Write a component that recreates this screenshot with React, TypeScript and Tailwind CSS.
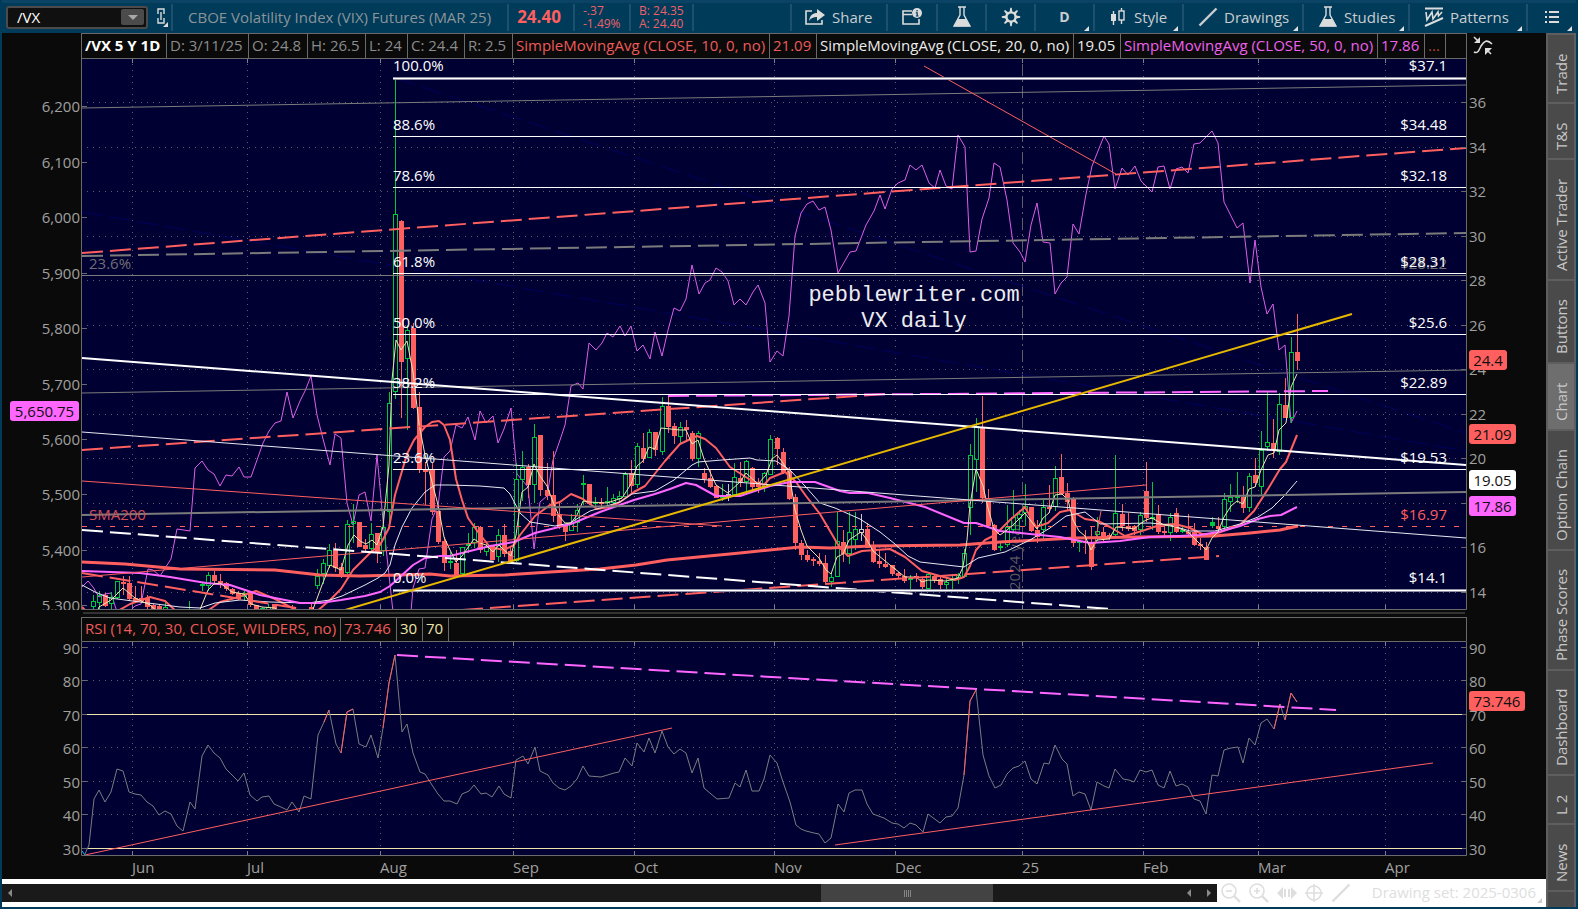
import React from 'react';

const RED = '#ff5f5f';
const GREEN = '#00c83c';
const PINK = '#ff66ff';
const CREAM = '#efe4ac';
const GREY = '#7b7b7b';
const NAVY = '#00005c';

const months = [
  { x: 132, label: 'Jun' },
  { x: 247, label: 'Jul' },
  { x: 380, label: 'Aug' },
  { x: 513, label: 'Sep' },
  { x: 634, label: 'Oct' },
  { x: 774, label: 'Nov' },
  { x: 895, label: 'Dec' },
  { x: 1022, label: '25' },
  { x: 1143, label: 'Feb' },
  { x: 1258, label: 'Mar' },
  { x: 1385, label: 'Apr' },
];

const leftTicks: [number, string][] = [
  [106, '6,200'], [162, '6,100'], [217, '6,000'], [273, '5,900'], [328, '5,800'],
  [384, '5,700'], [439, '5,600'], [494, '5,500'], [550, '5,400'], [605, '5,300'],
];

// 18 has no label, the SMA badge sits there
const rightTicks: [number, string][] = [
  [102, '36'], [147, '34'], [191, '32'], [236, '30'], [280, '28'], [325, '26'],
  [369, '24'], [414, '22'], [458, '20'], [503, ''], [547, '16'], [592, '14'],
];

const rsiTicks: [number, string][] = [
  [647, '90'], [680, '80'], [714, '70'], [747, '60'], [781, '50'], [814, '40'], [848, '30'],
];

const fibs: [number, string, string, number][] = [
  [78, '100.0%', '$37.1', 71],
  [136, '88.6%', '$34.48', 130],
  [187, '78.6%', '$32.18', 181],
  [273, '61.8%', '$28.31', 267],
  [334, '50.0%', '$25.6', 328],
  [394, '38.2%', '$22.89', 388],
  [469, '23.6%', '$19.53', 463],
  [590, '0.0%', '$14.1', 583],
];

// x, high, body top, body bottom, low, direction (g up, r down, w unchanged, f filled up)
type Candle = [number, number, number, number, number, string];
const candles: Candle[] = [
  [93, 595, 601, 607, 609, 'g'], [99, 591, 595, 603, 609, 'g'], [105, 593, 595, 606, 607, 'r'],
  [111, 592, 597, 604, 609, 'g'], [117, 581, 581, 598, 599, 'g'], [123, 576, 582, 584, 595, 'r'],
  [129, 576, 583, 599, 601, 'r'], [135, 586, 598, 601, 603, 'r'], [141, 586, 598, 601, 603, 'r'],
  [147, 595, 598, 607, 609, 'r'], [153, 604, 605, 609, 609, 'r'], [159, 604, 606, 609, 609, 'r'],
  [165, 601, 607, 610, 610, 'g'], [189, 601, 609, 612, 612, 'g'], [202, 582, 584, 586, 591, 'g'],
  [208, 572, 575, 586, 591, 'g'], [214, 571, 575, 581, 583, 'r'], [220, 574, 581, 585, 588, 'r'],
  [226, 582, 583, 589, 591, 'r'], [232, 588, 589, 594, 595, 'r'], [238, 591, 593, 598, 600, 'r'],
  [244, 591, 593, 597, 601, 'g'], [250, 591, 592, 605, 607, 'r'], [256, 605, 605, 609, 610, 'r'],
  [262, 607, 608, 612, 612, 'g'], [268, 604, 607, 612, 612, 'g'], [274, 604, 604, 609, 610, 'r'],
  [292, 605, 609, 612, 612, 'r'], [311, 603, 607, 612, 612, 'r'], [317, 569, 576, 586, 589, 'g'],
  [323, 559, 563, 574, 584, 'g'], [329, 544, 550, 566, 568, 'g'], [335, 543, 550, 568, 572, 'r'],
  [341, 563, 567, 576, 578, 'r'], [347, 520, 524, 573, 574, 'g'], [353, 504, 521, 524, 543, 'g'],
  [359, 522, 522, 547, 547, 'r'], [365, 539, 545, 549, 553, 'r'], [371, 523, 534, 549, 551, 'g'],
  [377, 533, 533, 553, 563, 'r'], [383, 510, 527, 551, 556, 'g'], [389, 392, 403, 512, 527, 'g'],
  [395, 78, 214, 392, 399, 'g'], [401, 220, 221, 362, 418, 'r'], [407, 325, 330, 359, 430, 'g'],
  [413, 323, 328, 408, 409, 'r'], [419, 392, 407, 469, 473, 'r'], [425, 462, 470, 472, 505, 'r'],
  [432, 463, 470, 512, 515, 'r'], [438, 511, 511, 542, 544, 'r'], [444, 537, 541, 563, 571, 'r'],
  [450, 552, 561, 563, 569, 'g'], [456, 550, 563, 576, 576, 'r'], [462, 547, 547, 574, 574, 'g'],
  [468, 533, 544, 546, 553, 'g'], [474, 523, 527, 543, 548, 'g'], [480, 526, 527, 550, 553, 'r'],
  [486, 541, 547, 552, 556, 'g'], [492, 545, 546, 560, 560, 'r'], [498, 529, 535, 557, 562, 'g'],
  [504, 524, 535, 554, 557, 'r'], [510, 547, 551, 563, 563, 'r'], [516, 463, 479, 561, 562, 'g'],
  [522, 451, 467, 480, 501, 'g'], [528, 464, 467, 485, 498, 'r'], [534, 424, 437, 485, 503, 'g'],
  [540, 435, 435, 490, 496, 'r'], [547, 463, 490, 496, 500, 'r'], [553, 451, 495, 516, 522, 'r'],
  [559, 502, 514, 527, 529, 'r'], [565, 524, 525, 532, 541, 'r'], [571, 514, 523, 531, 531, 'g'],
  [577, 504, 510, 523, 532, 'g'], [583, 475, 483, 485, 505, 'g'], [589, 484, 484, 504, 505, 'r'],
  [595, 497, 502, 504, 507, 'g'], [601, 498, 502, 504, 508, 'r'], [607, 487, 501, 503, 506, 'g'],
  [613, 494, 498, 503, 507, 'g'], [619, 491, 496, 499, 502, 'g'], [625, 472, 474, 497, 499, 'g'],
  [631, 460, 473, 486, 493, 'r'], [637, 443, 446, 485, 488, 'g'], [643, 433, 448, 459, 463, 'r'],
  [649, 429, 432, 458, 458, 'g'], [655, 432, 432, 450, 456, 'r'], [662, 397, 406, 452, 455, 'g'],
  [668, 396, 406, 427, 433, 'r'], [674, 423, 426, 436, 444, 'r'], [680, 422, 427, 437, 443, 'g'],
  [686, 420, 427, 430, 440, 'r'], [692, 431, 433, 459, 461, 'r'], [698, 431, 433, 459, 467, 'g'],
  [704, 468, 473, 479, 483, 'r'], [710, 470, 478, 487, 488, 'r'], [716, 485, 486, 498, 498, 'r'],
  [722, 484, 496, 498, 501, 'g'], [728, 484, 494, 496, 501, 'w'], [734, 463, 477, 495, 497, 'g'],
  [740, 462, 478, 482, 487, 'r'], [746, 460, 461, 482, 492, 'g'], [752, 467, 468, 487, 491, 'r'],
  [758, 478, 482, 487, 493, 'r'], [764, 472, 473, 487, 492, 'g'], [770, 435, 439, 475, 475, 'g'],
  [777, 437, 438, 449, 465, 'r'], [783, 448, 452, 473, 474, 'r'], [789, 467, 471, 499, 500, 'r'],
  [795, 494, 497, 543, 550, 'r'], [801, 540, 543, 555, 560, 'r'], [807, 550, 555, 560, 562, 'r'],
  [813, 557, 559, 561, 566, 'r'], [819, 553, 561, 564, 566, 'r'], [825, 555, 563, 582, 583, 'r'],
  [831, 573, 577, 582, 587, 'g'], [837, 512, 541, 577, 577, 'g'], [843, 530, 542, 554, 562, 'r'],
  [849, 512, 532, 554, 564, 'g'], [855, 512, 529, 540, 550, 'g'], [861, 514, 529, 533, 541, 'w'],
  [867, 523, 529, 548, 548, 'r'], [873, 541, 546, 562, 563, 'r'], [879, 550, 561, 564, 568, 'r'],
  [885, 553, 564, 567, 568, 'r'], [892, 565, 565, 574, 576, 'r'], [898, 572, 573, 576, 578, 'r'],
  [904, 569, 576, 581, 583, 'r'], [910, 575, 578, 580, 589, 'g'], [916, 573, 576, 578, 582, 'r'],
  [922, 578, 579, 587, 589, 'r'], [928, 572, 574, 589, 589, 'g'], [934, 574, 576, 580, 583, 'r'],
  [940, 575, 579, 585, 590, 'r'], [946, 578, 582, 585, 590, 'g'], [952, 574, 579, 581, 590, 'g'],
  [958, 573, 575, 578, 584, 'g'], [964, 549, 553, 577, 577, 'g'], [970, 444, 455, 508, 535, 'g'],
  [976, 418, 426, 460, 492, 'g'], [982, 396, 428, 498, 503, 'r'], [988, 489, 498, 526, 527, 'r'],
  [994, 524, 525, 550, 551, 'r'], [1000, 543, 546, 548, 551, 'g'], [1007, 505, 527, 545, 547, 'g'],
  [1013, 490, 517, 530, 532, 'g'], [1019, 510, 514, 519, 530, 'g'], [1025, 484, 506, 513, 526, 'g'],
  [1031, 507, 507, 531, 532, 'r'], [1037, 520, 530, 537, 543, 'r'], [1043, 498, 507, 530, 540, 'g'],
  [1049, 485, 507, 509, 513, 'r'], [1055, 466, 478, 507, 511, 'g'], [1061, 454, 477, 494, 495, 'r'],
  [1067, 483, 493, 502, 510, 'r'], [1073, 497, 499, 543, 547, 'r'], [1079, 540, 541, 543, 552, 'g'],
  [1085, 530, 542, 543, 554, 'r'], [1091, 527, 542, 567, 570, 'r'], [1097, 517, 531, 535, 541, 'g'],
  [1103, 527, 532, 537, 541, 'r'], [1109, 533, 535, 539, 540, 'r'], [1115, 455, 513, 535, 537, 'g'],
  [1122, 504, 514, 526, 531, 'r'], [1128, 513, 526, 529, 531, 'r'], [1134, 525, 527, 531, 535, 'r'],
  [1140, 512, 515, 530, 535, 'g'], [1146, 462, 491, 518, 522, 'r'], [1152, 482, 517, 519, 530, 'g'],
  [1158, 505, 514, 532, 534, 'r'], [1164, 527, 531, 533, 537, 'r'], [1170, 513, 517, 533, 541, 'g'],
  [1176, 508, 513, 532, 533, 'r'], [1182, 527, 530, 532, 533, 'g'], [1188, 514, 532, 534, 536, 'r'],
  [1194, 523, 532, 545, 546, 'r'], [1200, 538, 544, 546, 550, 'r'], [1206, 542, 547, 560, 560, 'r'],
  [1212, 517, 522, 526, 528, 'f'], [1218, 517, 527, 529, 531, 'r'], [1224, 493, 499, 527, 528, 'g'],
  [1230, 484, 497, 502, 512, 'g'], [1237, 472, 496, 498, 503, 'g'], [1243, 486, 497, 508, 513, 'r'],
  [1249, 473, 476, 508, 512, 'g'], [1255, 458, 475, 483, 487, 'r'], [1261, 431, 450, 487, 495, 'g'],
  [1267, 392, 442, 447, 451, 'g'], [1273, 419, 443, 450, 458, 'r'], [1279, 393, 404, 452, 455, 'g'],
  [1285, 378, 405, 418, 418, 'r'], [1291, 337, 352, 418, 423, 'g'], [1297, 314, 352, 361, 370, 'r'],
];

const spx = [
  '82,587 88,581 93,587 99,597 105,594 111,593 117,612',
  '129,612 135,606 141,604 148,569 153,570 160,576 171,559 177,529 190,531 195,468 202,461 208,470 214,474 220,486 226,475 232,476 239,467 244,477 251,477 263,443 269,431 275,423 281,421 287,392 293,418 300,401 305,391 311,376 317,415 323,439 330,465 335,434 341,438 347,503 353,525 359,495 365,492 371,521 377,455 383,520 393,612',
  '411,612 413,588 419,569 425,568 432,519 438,506 444,457 450,451 456,425 462,428 468,417 475,440 480,411 486,423 493,416 498,443 504,429 511,408 517,474 528,487 534,549 540,502 547,496 553,460 559,443 565,425 571,386 578,383 583,389 589,343 596,350 602,343 607,333 613,337 620,326 625,336 631,326 637,351 643,345 650,359 655,332 662,356 668,330 674,308 680,311 686,299 692,265 699,294 705,283 710,280 716,268 722,272 728,281 734,305 740,299 746,305 753,292 758,285 765,303 770,362 777,351 783,356 789,316 795,236 801,213 807,204 813,201 819,210 825,207 831,230 838,273 850,252 856,251 866,225 874,211 880,195 885,209 892,189 898,183 905,180 910,165 916,170 922,165 929,183 935,188 940,170 946,186 952,189 958,135 965,147 970,252 976,251 982,219 989,198 994,163 1000,167 1007,200 1013,243 1020,252 1025,262 1031,225 1037,203 1043,242 1050,243 1055,294 1061,283 1067,277 1073,224 1079,234 1086,194 1092,166 1104,136 1109,144 1115,189 1122,168 1128,175 1135,166 1141,181 1152,192 1158,167 1164,166 1170,189 1176,169 1182,167 1188,173 1194,144 1200,143 1212,131 1218,143 1224,202 1237,228 1243,223 1250,283 1255,240 1261,287 1267,314 1273,304 1279,350 1285,345 1291,423 1297,411',
];

const sma200 =
  '82,562 125,564 180,569 275,570 320,575 360,576 400,575 430,574 450,576 505,575 550,572 600,569 636,565 667,560 740,553 800,547 830,548 870,546 960,545 1000,542 1075,538 1140,537 1215,536 1250,533 1280,530 1298,526';
const sma50 =
  '82,571 140,573 170,577 206,583 230,585 260,595 300,603 320,603 341,600 365,596 380,592 390,586 400,577 413,565 425,558 440,556 450,556 490,546 514,542 535,533 571,524 600,512 634,500 655,494 670,489 686,483 696,485 716,496 740,496 770,486 790,482 815,482 840,491 850,493 868,493 890,498 925,507 964,523 976,523 1000,531 1030,534 1060,537 1090,543 1120,541 1150,537 1180,536 1200,535 1218,532 1240,526 1258,519 1270,516 1281,515 1297,507';
const sma20 =
  '82,585 95,592 110,598 140,602 180,607 200,608 215,603 240,600 270,602 308,603 330,600 342,596 365,585 378,578 385,573 390,565 395,545 402,527 412,508 425,492 435,485 450,485 480,486 504,488 510,494 520,513 530,522 555,526 570,523 590,511 620,502 632,494 655,491 674,480 692,465 698,462 722,460 750,458 757,460 776,461 790,470 805,486 820,503 835,508 860,519 880,532 895,544 908,556 920,562 964,567 978,558 1005,552 1030,540 1050,528 1066,516 1085,512 1100,524 1150,523 1170,525 1190,531 1215,531 1240,524 1258,517 1272,508 1285,495 1297,481';
const sma10 = [
  '82,607 87,612',
  '116,612 130,604 150,597 165,601 177,612',
  '206,612 220,602 235,598 256,591 275,599 300,612',
  '316,612 330,600 341,589 353,570 371,552 380,545 389,528 395,495 407,454 414,440 425,427 432,422 439,421 444,425 450,440 456,479 462,500 468,518 478,532 490,547 504,550 514,545 520,535 535,516 550,505 560,502 571,494 583,499 597,509 610,507 620,502 634,492 645,486 665,461 680,444 697,436 705,439 716,448 730,467 752,481 764,485 770,478 785,472 796,482 806,496 820,514 840,548 848,556 862,551 890,549 905,557 922,571 940,576 955,580 964,577 970,566 976,550 985,540 995,535 1010,520 1025,507 1036,527 1048,523 1060,512 1070,510 1085,519 1098,521 1110,527 1125,536 1145,530 1160,525 1175,524 1190,528 1202,534 1215,534 1240,525 1254,511 1268,489 1280,469 1286,462 1297,435',
];
const sma5 = [
  '97,612 99,607 111,600 123,588 135,598 150,605 158,612',
  '199,612 208,590 214,584 220,583 232,592 244,594 251,604 262,607 275,608 280,612',
  '312,612 322,585 330,565 341,570 348,545 354,535 360,541 366,544 372,540 377,545 383,527 389,465 392,380 396,340 401,350 407,341 413,372 419,424 425,455 432,482 438,505 444,537 450,550 456,562 462,556 474,539 480,543 486,545 493,552 499,545 504,550 511,556 516,535 522,492 528,487 534,464 540,476 547,486 553,502 559,516 565,523 571,523 577,515 583,501 589,502 607,503 622,498 631,484 637,466 643,461 649,447 655,449 661,428 680,430 686,430 692,444 698,440 704,459 716,485 728,493 740,482 746,473 758,484 766,475 772,459 777,455 783,463 789,472 795,510 801,530 807,546 819,558 826,570 831,574 837,557 843,554 849,540 861,532 867,540 873,551 890,565 905,577 916,577 922,582 928,580 946,581 958,578 963,567 967,540 970,505 976,469 983,486 988,508 994,529 1000,535 1007,530 1013,525 1025,513 1037,529 1043,518 1049,513 1055,495 1062,494 1068,500 1073,520 1079,531 1085,536 1091,550 1097,540 1109,539 1116,527 1128,528 1134,529 1140,524 1146,520 1152,518 1164,525 1176,527 1188,532 1200,544 1206,550 1212,538 1218,532 1224,517 1231,506 1237,501 1243,504 1249,489 1255,487 1261,470 1268,455 1274,453 1279,430 1286,423 1291,387 1297,374',
];

const rsi =
  '85,854 89,845 94,799 99,790 105,802 111,792 117,769 123,771 129,792 135,794 141,795 147,802 153,806 159,815 165,811 171,814 177,826 183,831 190,802 195,809 202,756 208,745 214,753 220,758 226,769 232,775 238,781 244,773 250,795 257,801 262,797 269,796 274,804 281,807 287,810 292,802 299,812 304,796 311,799 318,735 324,722 329,710 336,744 341,753 347,712 353,709 359,744 366,747 371,735 378,758 383,728 389,683 395,655 402,732 407,724 413,753 420,772 425,774 432,785 438,794 444,801 450,801 457,804 462,794 469,791 474,785 481,794 486,793 492,797 499,786 504,794 511,798 516,760 523,756 528,764 535,747 540,771 548,775 553,783 559,788 565,790 571,786 577,779 583,766 589,776 601,777 614,773 619,772 625,758 632,766 637,743 644,752 649,738 655,753 662,731 668,747 674,754 680,749 686,753 692,773 698,758 704,788 717,799 729,798 735,783 740,787 746,770 752,791 759,791 764,779 770,755 777,763 783,782 790,802 796,825 801,829 806,831 814,833 819,834 825,843 831,838 838,804 844,812 849,793 855,790 862,790 867,804 873,814 884,818 892,823 898,824 904,828 910,823 916,825 923,832 928,814 940,823 946,817 952,816 958,808 964,775 970,701 976,690 983,755 989,776 995,788 1001,785 1007,774 1013,768 1019,766 1025,761 1031,779 1037,784 1044,763 1049,764 1055,745 1062,759 1067,764 1073,796 1079,792 1085,794 1091,810 1097,782 1104,786 1109,788 1115,769 1123,779 1129,780 1134,782 1140,770 1146,772 1152,770 1158,785 1164,788 1170,771 1176,786 1182,784 1188,787 1194,799 1200,801 1206,814 1212,775 1218,776 1224,750 1231,748 1238,747 1243,763 1249,738 1255,745 1261,723 1267,719 1274,729 1280,704 1285,720 1291,693 1297,702';
const rsiHot = [
  '324,722 329,710',
  '341,753 347,712 353,709',
  '383,728 389,683 395,655',
  '964,775 970,701 976,690',
  '1274,729 1280,704',
  '1285,720 1291,693 1297,702',
];

interface SegProps {
  p: [number, number, number, number];
  c: string;
  w?: number;
  dash?: string;
}

function Seg({ p, c, w = 1, dash }: SegProps) {
  return <line x1={p[0]} y1={p[1]} x2={p[2]} y2={p[3]} stroke={c} strokeWidth={w} strokeDasharray={dash} />;
}

function Curve({ points, c, w = 1 }: { points: string; c: string; w?: number }) {
  return <polyline points={points} fill="none" stroke={c} strokeWidth={w} strokeLinejoin="round" />;
}

function Stick({ d }: { d: Candle }) {
  const [x, high, top, bottom, low, kind] = d;
  const color = kind === 'r' ? RED : kind === 'w' ? '#c8c8c8' : GREEN;
  const h = Math.max(bottom - top, 1);
  if (kind === 'r' || kind === 'f' || h < 3) {
    return (
      <g fill={color}>
        <rect x={x} y={high} width={1} height={low - high} />
        <rect x={x - 2} y={top} width={5} height={h} />
      </g>
    );
  }
  return (
    <g fill={color}>
      <rect x={x} y={high} width={1} height={top - high} />
      <rect x={x} y={bottom} width={1} height={Math.max(low - bottom, 0)} />
      <rect x={x - 1.5} y={top + 0.5} width={4} height={h - 1} fill="none" stroke={color} />
    </g>
  );
}

function Badge({ x, y, w, fill, text }: { x: number; y: number; w: number; fill: string; text: string }) {
  return (
    <g>
      <rect x={x} y={y - 10} width={w} height={20} rx={3} fill={fill} />
      <text x={x + w / 2} y={y + 6} textAnchor="middle" fill="#101010">{text}</text>
    </g>
  );
}

function PriceChart() {
  return (
    <svg viewBox="2 59 1544 551" className="block w-full text-[15px]" role="img" aria-label="/VX daily price chart">
      <defs>
        <clipPath id="price-area">
          <rect x={82} y={59} width={1384} height={550} />
        </clipPath>
      </defs>
      <rect x={82} y={59} width={1384} height={550} fill="#000033" />
      <g clipPath="url(#price-area)">
        {rightTicks.map(([y]) => (
          <Seg key={y} p={[87, y + 0.5, 1466, y + 0.5]} c="#5d5d6c" dash="1 5" />
        ))}
        {months.map(({ x, label }) => (
          <g key={label}>
            <Seg p={[x + 0.5, 64, x + 0.5, 609]} c="#5d5d6c" dash={label === '25' ? '12 4 2 4' : '1 5'} />
            <Seg p={[x + 0.5, 59, x + 0.5, 63]} c="#808080" />
            <Seg p={[x + 0.5, 605, x + 0.5, 609]} c="#808080" />
          </g>
        ))}
        <text transform="translate(1020 590) rotate(-90)" fill="#5a5a5a">2024 year</text>

        <Seg p={[395, 78, 1466, 433]} c={NAVY} dash="21 7" />
        <Seg p={[82, 212, 1466, 451]} c={NAVY} dash="21 7" />

        {spx.map((s) => <Curve key={s} points={s} c="#de5fe8" />)}
        {candles.map((d) => <Stick key={d[0]} d={d} />)}

        <Curve points={sma200} c={RED} w={3} />
        {sma10.map((s) => <Curve key={s} points={s} c={RED} w={2} />)}
        <Curve points={sma20} c="#e8e8f0" />
        <Curve points={sma50} c={PINK} w={2} />
        {sma5.map((s) => <Curve key={s} points={s} c={CREAM} />)}

        <Seg p={[82, 108, 1466, 85]} c={GREY} />
        <Seg p={[82, 393, 1466, 370]} c={GREY} />
        <Seg p={[82, 515, 1466, 492]} c={GREY} w={2} />
        <Seg p={[82, 256, 1466, 233]} c={GREY} w={2} dash="21 7" />
        <Seg p={[82, 275.5, 1466, 275.5]} c={GREY} />
        <Seg p={[82, 253, 1466, 148]} c={RED} w={2} dash="21 7" />
        <Seg p={[82, 450, 885, 394]} c={RED} w={2} dash="21 7" />
        <Seg p={[82, 573, 302, 609]} c={RED} w={2} dash="21 7" />
        <Seg p={[462, 610, 1219, 556]} c={RED} w={2} dash="21 7" />
        <Seg p={[82, 481, 722, 526]} c={RED} />
        <Seg p={[82, 577, 1146, 485]} c={RED} />
        <Seg p={[924, 66, 1116, 174]} c={RED} />
        <Seg p={[1091, 565, 1101, 511]} c={RED} />
        <Seg p={[82, 526.5, 1466, 526.5]} c={RED} dash="5 9" />
        <Seg p={[82, 530, 1110, 609]} c="#ffffff" w={2} dash="21 7" />
        <Seg p={[668, 396, 1328, 391]} c={PINK} w={2} dash="21 7" />

        {fibs.map(([y, pct, price, base]) => {
          const edge = y === 78 || y === 590;
          return (
            <g key={pct}>
              {edge && <Seg p={[393, y + 0.5, 1466, y + 0.5]} c="#8f8fa6" w={3} />}
              <Seg p={[393, y + 0.5, 1466, y + 0.5]} c="#ffffff" />
              <text x={393} y={base} fill="#ffffff">{pct}</text>
              {pct === '61.8%' && (
                <text x={1447} y={269} textAnchor="end" fill="#707070">$28.22</text>
              )}
              <text x={1447} y={base} textAnchor="end" fill="#ffffff">{price}</text>
            </g>
          );
        })}

        <Seg p={[82, 358, 1466, 465]} c="#ffffff" w={2} />
        <Seg p={[82, 432, 1466, 538]} c="#e8e8f0" />
        <Seg p={[345, 610, 1352, 314]} c="#e6b800" w={2} />

        <text x={89} y={269} fill="#707070">23.6%</text>
        <text x={89} y={520} fill="#d04f55">SMA200</text>
        <text x={1447} y={520} textAnchor="end" fill={RED}>$16.97</text>
        <g textAnchor="middle" fill="#ececf0" className="font-['Liberation_Mono',monospace] text-[22px]">
          <text x={914} y={301}>pebblewriter.com</text>
          <text x={914} y={327}>VX daily</text>
        </g>
      </g>

      <g fill="#a0a0a0">
        {leftTicks.map(([y, label]) => (
          <g key={label}>
            <Seg p={[82, y + 0.5, 87, y + 0.5]} c="#6a6a6a" />
            <text x={80} y={y + 6} textAnchor="end">{label}</text>
          </g>
        ))}
        {rightTicks.map(([y, label]) => (
          <g key={y}>
            <Seg p={[1462, y + 0.5, 1466, y + 0.5]} c="#6a6a6a" />
            {label && <text x={1469} y={y + 6}>{label}</text>}
          </g>
        ))}
      </g>
      <path d="M81.5 59 V609.5 H1466.5 V59" fill="none" stroke="#6a6a6a" />

      <Badge x={10} y={411} w={69} fill={PINK} text="5,650.75" />
      <Badge x={1469} y={360} w={38} fill={RED} text="24.4" />
      <Badge x={1469} y={434} w={47} fill={RED} text="21.09" />
      <Badge x={1469} y={480} w={47} fill="#ffffff" text="19.05" />
      <Badge x={1469} y={506} w={47} fill={PINK} text="17.86" />
    </svg>
  );
}

function RsiChart() {
  return (
    <svg viewBox="2 641 1544 238" className="block w-full text-[15px]" role="img" aria-label="RSI study">
      <defs>
        <clipPath id="rsi-area">
          <rect x={82} y={642} width={1384} height={213} />
        </clipPath>
      </defs>
      <rect x={82} y={642} width={1384} height={213} fill="#000033" />
      <g clipPath="url(#rsi-area)">
        {rsiTicks.map(([y]) => (
          <Seg key={y} p={[87, y + 0.5, 1466, y + 0.5]} c="#5d5d6c" dash="1 5" />
        ))}
        {months.map(({ x, label }) => (
          <g key={label}>
            <Seg p={[x + 0.5, 647, x + 0.5, 855]} c="#5d5d6c" dash="1 5" />
            <Seg p={[x + 0.5, 642, x + 0.5, 646]} c="#808080" />
            <Seg p={[x + 0.5, 851, x + 0.5, 855]} c="#808080" />
          </g>
        ))}
        <Seg p={[82, 714.5, 1466, 714.5]} c={CREAM} />
        <Seg p={[82, 848.5, 1466, 848.5]} c={CREAM} />
        <Curve points={rsi} c="#7c7c80" />
        <Seg p={[82, 851, 85, 855]} c="#00d0e0" />
        {rsiHot.map((s) => <Curve key={s} points={s} c={RED} />)}
        <Seg p={[85, 855, 672, 728]} c={RED} />
        <Seg p={[835, 845, 1433, 763]} c={RED} />
        <Seg p={[397, 655, 1336, 710]} c={PINK} w={2} dash="21 7" />
      </g>
      <g fill="#a0a0a0">
        {rsiTicks.map(([y, label]) => (
          <g key={label}>
            <Seg p={[82, y + 0.5, 87, y + 0.5]} c="#6a6a6a" />
            <Seg p={[1462, y + 0.5, 1466, y + 0.5]} c="#6a6a6a" />
            <text x={80} y={y + 7} textAnchor="end">{label}</text>
            <text x={1469} y={y + 7}>{label}</text>
          </g>
        ))}
        {months.map(({ x, label }) => (
          <text key={label} x={x} y={873}>{label}</text>
        ))}
      </g>
      <path d="M81.5 641.5 H1466.5 V855.5 H81.5 Z" fill="none" stroke="#6a6a6a" />
      <Badge x={1469} y={701} w={56} fill={RED} text="73.746" />
    </svg>
  );
}

function Corner() {
  return (
    <svg viewBox="0 0 5 5" className="absolute right-1 bottom-0 size-[5px]" aria-hidden="true">
      <path d="M5 0 V5 H0 Z" fill="#e0e0e0" />
    </svg>
  );
}

function FlaskIcon() {
  return (
    <svg viewBox="0 0 20 22" className="h-[22px] w-5" fill="none" stroke="#dcdcdc" strokeWidth={1.4} aria-hidden="true">
      <path d="M6 1 H14 M8 1 V9 L2 20 H18 L12 9 V1" />
      <path d="M6 13 H14 L18 20.500 H2 Z" fill="#dcdcdc" stroke="none" />
    </svg>
  );
}

function ShareIcon() {
  return (
    <svg viewBox="0 0 22 18" className="h-[18px] w-[22px]" fill="none" aria-hidden="true">
      <path d="M8 3 H2 V16 H18 V12" stroke="#dcdcdc" strokeWidth={1.6} />
      <path d="M5 13 C6 7 9 5 13 5 V1 L21 7 L13 13 V9 C9 9 7 10 5 13 Z" fill="#dcdcdc" />
    </svg>
  );
}

function InfoIcon() {
  return (
    <svg viewBox="0 0 22 18" className="h-[18px] w-[22px]" fill="none" aria-hidden="true">
      <path d="M11 3 H2 V16 H18 V11 M2 6.500 H11" stroke="#dcdcdc" strokeWidth={1.6} />
      <circle cx={16} cy={5} r={5} fill="#dcdcdc" />
      <path d="M16 2 V3.400 M14.800 4.800 H16.200 V8 M14.800 8 H17.600" stroke="#003b5a" strokeWidth={1.2} />
    </svg>
  );
}

function GearIcon() {
  const spokes = [0, 45, 90, 135, 180, 225, 270, 315];
  return (
    <svg viewBox="0 0 20 20" className="size-5" aria-hidden="true">
      <circle cx={10} cy={10} r={4.600} fill="none" stroke="#dcdcdc" strokeWidth={2.400} />
      {spokes.map((a) => (
        <path key={a} d="M8.600 5 L9.300 0.800 H10.700 L11.400 5 Z" fill="#dcdcdc" transform={`rotate(${a} 10 10)`} />
      ))}
    </svg>
  );
}

function StyleIcon() {
  return (
    <svg viewBox="0 0 16 18" className="h-[18px] w-4" aria-hidden="true">
      <path d="M3.500 3 V17 M11.500 0 V3 M11.500 12 V16" stroke="#dcdcdc" strokeWidth={1.4} />
      <rect x={1} y={6} width={5} height={7} fill="#dcdcdc" />
      <rect x={9} y={3} width={5} height={9} fill="none" stroke="#dcdcdc" strokeWidth={1.4} />
    </svg>
  );
}

function SlashIcon() {
  return (
    <svg viewBox="0 0 20 20" className="size-5" aria-hidden="true">
      <path d="M1.500 18.500 L18.500 1.500" stroke="currentColor" strokeWidth={2.400} />
    </svg>
  );
}

function PatternsIcon() {
  return (
    <svg viewBox="0 0 20 20" className="size-5" fill="none" stroke="#dcdcdc" strokeWidth={1.6} aria-hidden="true">
      <path d="M1 1.500 H19" strokeWidth={2} />
      <path d="M2 5 L3 13 L8 5 L9 12 L14 5 L14.500 9 L18 5" />
      <path d="M1 19 L19 11" strokeWidth={2} />
    </svg>
  );
}

function ListIcon() {
  return (
    <svg viewBox="0 0 14 14" className="size-[14px]" stroke="#dcdcdc" strokeWidth={2} aria-hidden="true">
      <path d="M0 2 H2 M0 7 H2 M0 12 H2 M4 2 H14 M4 7 H14 M4 12 H14" />
    </svg>
  );
}

function Toolbar() {
  const item = 'relative flex h-[27px] shrink-0 items-center border-r-2 border-[#1d4f6e]';
  return (
    <header className="flex h-[33px] items-center overflow-hidden border-t-3 border-[#0a4363] pb-[2px] text-[15px] text-[#c9cdd0]">
      <div className={`${item} w-[171px] pl-1`}>
        <div className="flex h-[23px] w-[142px] items-center rounded-[3px] border-2 border-[#4b4b4b] bg-[#101010] pr-[2px]">
          <input aria-label="Symbol" defaultValue="/VX" className="w-full min-w-0 bg-transparent pl-[9px] text-white outline-none" />
          <button aria-label="Symbol list" className="flex h-4 w-[23px] shrink-0 items-center justify-center rounded-[2px] bg-[#4b4b4b]">
            <svg viewBox="0 0 10 5" className="h-[5px] w-[10px]"><path d="M0 0 H10 L5 5 Z" fill="#a8a8a8" /></svg>
          </button>
        </div>
        <button aria-label="Link symbol" className="ml-2">
          <svg viewBox="0 0 12 20" className="h-5 w-3" fill="none" stroke="#dcdcdc" strokeWidth={1.4}>
            <path d="M2 7 V2 H8 V7 M2 11 V16 H8 V11 M5 5 V13" />
            <path d="M12 15 V20 H7 Z" fill="#dcdcdc" stroke="none" />
          </svg>
        </button>
      </div>
      <div className={`${item} w-[336px] pl-[15px] whitespace-nowrap text-[#8b9499]`}>
        CBOE Volatility Index (VIX) Futures (MAR 25)
      </div>
      <div className={`${item} w-[66px] justify-center pr-1 text-[17px] font-bold text-[#ff5f5f]`}>24.40</div>
      <div className={`${item} w-14 flex-col items-start! justify-center pl-2 text-xs leading-[13px] text-[#ee6068]`}>
        <span>-.37</span>
        <span>-1.49%</span>
      </div>
      <div className={`${item} w-[63px] flex-col items-start! justify-center pl-2 text-xs leading-[13px] whitespace-nowrap text-[#ee6068]`}>
        <span>B: 24.35</span>
        <span>A: 24.40</span>
      </div>
      <div className="h-[27px] flex-1 border-r-2 border-[#1d4f6e]" />
      <button className={`${item} w-24 gap-[6px] pl-3`}><ShareIcon />Share</button>
      <button aria-label="Info" className={`${item} w-[50px] justify-center`}><InfoIcon /></button>
      <button aria-label="Lab" className={`${item} w-[49px] justify-center`}><FlaskIcon /></button>
      <button aria-label="Settings" className={`${item} w-[49px] justify-center`}><GearIcon /></button>
      <button className={`${item} w-[59px] justify-center text-sm font-bold`}>D<Corner /></button>
      <button className={`${item} w-[89px] gap-2 pl-[15px]`}><StyleIcon />Style<Corner /></button>
      <button className={`${item} w-[120px] gap-[6px] pl-[14px]`}><SlashIcon />Drawings<Corner /></button>
      <button className={`${item} w-[106px] gap-[6px] pl-[14px]`}><FlaskIcon />Studies<Corner /></button>
      <button className={`${item} w-[118px] gap-[6px] pl-[14px]`}><PatternsIcon />Patterns<Corner /></button>
      <button aria-label="Menu" className="relative flex h-[27px] w-12 shrink-0 items-center pl-[17px]"><ListIcon /><Corner /></button>
    </header>
  );
}

const legend = [
  { text: '/VX 5 Y 1D', cls: 'w-[85px] font-bold text-white' },
  { text: 'D: 3/11/25', cls: 'w-[82px] text-[#8c8c8c]' },
  { text: 'O: 24.8', cls: 'w-[59px] text-[#8c8c8c]' },
  { text: 'H: 26.5', cls: 'w-[58px] text-[#8c8c8c]' },
  { text: 'L: 24', cls: 'w-[42px] text-[#8c8c8c]' },
  { text: 'C: 24.4', cls: 'w-[57px] text-[#8c8c8c]' },
  { text: 'R: 2.5', cls: 'w-12 text-[#8c8c8c]' },
  { text: 'SimpleMovingAvg (CLOSE, 10, 0, no)', cls: 'w-[257px] text-[#ee5a5a]' },
  { text: '21.09', cls: 'w-[47px] text-[#ee5a5a]' },
  { text: 'SimpleMovingAvg (CLOSE, 20, 0, no)', cls: 'w-[257px] text-[#ececec]' },
  { text: '19.05', cls: 'w-[47px] text-[#ececec]' },
  { text: 'SimpleMovingAvg (CLOSE, 50, 0, no)', cls: 'w-[257px] text-[#ee60ee]' },
  { text: '17.86', cls: 'w-[47px] text-[#ee60ee]' },
  { text: '...', cls: 'w-[21px] text-[#b0483c]' },
];

const rsiLegend = [
  { text: 'RSI (14, 70, 30, CLOSE, WILDERS, no)', cls: 'w-[259px] text-[#ee5a5a]' },
  { text: '73.746', cls: 'w-14 text-[#ee5a5a]' },
  { text: '30', cls: 'w-[26px] text-[#efe4ac]' },
  { text: '70', cls: 'w-[26px] text-[#efe4ac]' },
];

function Legend({ items, height }: { items: { text: string; cls: string }[]; height: string }) {
  return (
    <div className={`flex min-w-0 flex-1 overflow-hidden border-x border-t border-[#6a6a6a] ${height}`}>
      {items.map(({ text, cls }) => (
        <div key={text} className={`flex shrink-0 items-center border-r border-[#6a6a6a] pb-[2px] pl-[3px] ${cls}`}>
          <span className="whitespace-nowrap">{text}</span>
        </div>
      ))}
    </div>
  );
}

const tabs = [
  { label: 'Trade', cls: 'h-[69px]' },
  { label: 'T&S', cls: 'h-14' },
  { label: 'Active Trader', cls: 'h-[121px]' },
  { label: 'Buttons', cls: 'h-[83px]' },
  { label: 'Chart', cls: 'h-[67px]' },
  { label: 'Option Chain', cls: 'h-[120px]' },
  { label: 'Phase Scores', cls: 'h-[120px]' },
  { label: 'Dashboard', cls: 'h-[105px]' },
  { label: 'L 2', cls: 'h-[49px]' },
  { label: 'News', cls: 'h-[67px]' },
];

function SideTabs() {
  return (
    <nav aria-label="Gadgets" className="flex w-[30px] shrink-0 flex-col border-x-2 border-t-2 border-[#5e5e5e] bg-[#4a4a4a] text-[15px] text-[#c8c8c8]">
      {tabs.map(({ label, cls }) => (
        <button
          key={label}
          className={`flex w-full rotate-180 items-center border-t-2 border-[#5e5e5e] pt-2 [writing-mode:vertical-rl] ${cls} ${label === 'Chart' ? 'bg-[#6e6e6e]' : 'bg-[#4a4a4a]'}`}
        >
          {label}
        </button>
      ))}
    </nav>
  );
}

function Footer() {
  return (
    <footer className="flex h-7 items-center bg-white text-[#dedede]">
      <div className="flex h-[18px] min-w-0 flex-1 items-center bg-[#1a1a1a]">
        <button aria-label="Scroll left" className="w-[47px] pl-[6px]">
          <svg viewBox="0 0 4 8" className="h-2 w-1"><path d="M4 0 V8 L0 4 Z" fill="#8a8a8a" /></svg>
        </button>
        <div className="h-full flex-1" />
        <div className="flex h-full w-[172px] items-center justify-center gap-px bg-[#434343]">
          <span className="h-[7px] w-px bg-[#858585]" />
          <span className="h-[7px] w-px bg-[#858585]" />
          <span className="h-[7px] w-px bg-[#858585]" />
          <span className="h-[7px] w-px bg-[#858585]" />
        </div>
        <div className="flex h-full w-56 items-center justify-end gap-4 pr-[6px]">
          <button aria-label="Step left"><svg viewBox="0 0 4 8" className="h-2 w-1"><path d="M4 0 V8 L0 4 Z" fill="#8a8a8a" /></svg></button>
          <button aria-label="Step right"><svg viewBox="0 0 4 8" className="h-2 w-1"><path d="M0 0 V8 L4 4 Z" fill="#8a8a8a" /></svg></button>
        </div>
      </div>
      <div className="flex items-center gap-2 pl-1">
        <button aria-label="Zoom out">
          <svg viewBox="0 0 20 20" className="size-5" fill="none" stroke="currentColor" strokeWidth={1.6}>
            <circle cx={8} cy={8} r={7} />
            <path d="M5 8 H11" />
            <path d="M13 13 L19 19" strokeWidth={2.400} />
          </svg>
        </button>
        <button aria-label="Zoom in">
          <svg viewBox="0 0 20 20" className="size-5" fill="none" stroke="currentColor" strokeWidth={1.6}>
            <circle cx={8} cy={8} r={7} />
            <path d="M5 8 H11 M8 5 V11" />
            <path d="M13 13 L19 19" strokeWidth={2.400} />
          </svg>
        </button>
        <button aria-label="Pan">
          <svg viewBox="0 0 20 12" className="h-3 w-5" fill="currentColor">
            <path d="M0 6 L6 0 V12 Z M20 6 L14 0 V12 Z M7 2 H9 V10 H7 Z M11 2 H13 V10 H11 Z" />
          </svg>
        </button>
        <button aria-label="Crosshair">
          <svg viewBox="0 0 18 18" className="size-[18px]" fill="none" stroke="currentColor" strokeWidth={1.6}>
            <circle cx={9} cy={9} r={7} />
            <path d="M9 0 V18 M0 9 H18" />
          </svg>
        </button>
        <button aria-label="Draw line"><SlashIcon /></button>
      </div>
      <button className="relative h-7 w-[195px] pr-[10px] pb-[2px] text-right text-[15px] whitespace-nowrap">
        Drawing set: 2025-0306
        <svg viewBox="0 0 5 5" className="absolute right-1 bottom-1 size-[5px]"><path d="M5 0 V5 H0 Z" fill="#cfcfcf" /></svg>
      </button>
    </footer>
  );
}

export default function App() {
  return (
    <div className="flex min-h-screen flex-col bg-[#003b5a] px-[2px] pb-[2px] font-['Open_Sans','Noto_Sans',sans-serif] text-[15px]">
      <Toolbar />
      <div className="flex flex-1">
        <main className="flex min-w-0 flex-1 flex-col bg-[#0a0a0a]">
          <div className="flex pl-[79px]">
            <Legend items={legend} height="h-[26px] border-b" />
            <div className="flex w-[79px] items-center pl-[6px]">
              <svg viewBox="0 0 20 20" className="size-5" fill="none" stroke="#dcdcdc" strokeWidth={1.6} aria-hidden="true">
                <path d="M1 16 C5 18 6 14 8 10 C11 5 14 3 19 8" />
                <path d="M1 1 L6 6 M18 18 L13 13" />
                <path d="M7 1 V7 H1 Z M12 12 H19 L12 19 Z" fill="#dcdcdc" stroke="none" />
              </svg>
            </div>
          </div>
          <PriceChart />
          <div className="mr-[81px] ml-[81px] h-[7px] py-[2px]">
            <div className="h-[2px] bg-[#333333]" />
          </div>
          <div className="flex pr-[79px] pl-[79px]">
            <Legend items={rsiLegend} height="h-6" />
          </div>
          <RsiChart />
          <Footer />
        </main>
        <SideTabs />
      </div>
    </div>
  );
}
